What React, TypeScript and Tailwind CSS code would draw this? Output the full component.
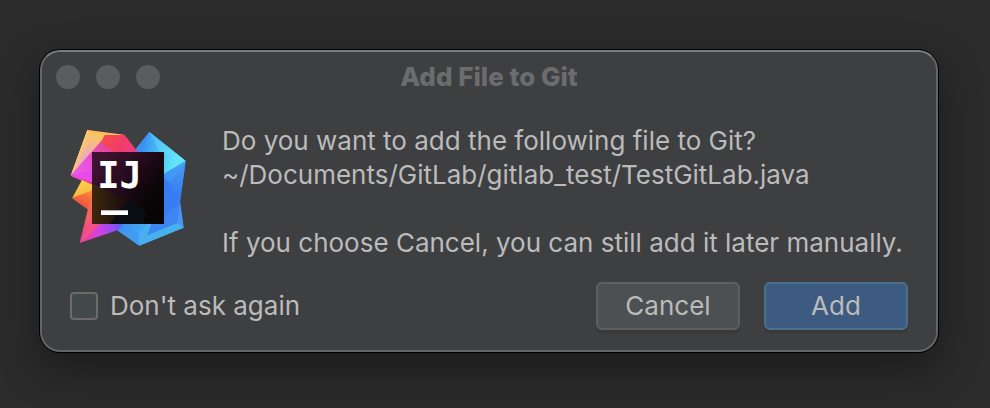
import React from "react";

const lights = ["Close", "Minimize", "Zoom"];

function AppLogo() {
  return (
    <svg viewBox="30 27 351 351" className="size-[117px] shrink-0" role="img" aria-label="IntelliJ IDEA">
      <defs>
        <linearGradient id="lilac" gradientUnits="userSpaceOnUse" x1="100" y1="30" x2="70" y2="160">
          <stop offset="0" stopColor="#fccb58" />
          <stop offset="0.4" stopColor="#f4b498" />
          <stop offset="0.75" stopColor="#ea9ce0" />
          <stop offset="1" stopColor="#e880e4" />
        </linearGradient>
        <linearGradient id="yellow" gradientUnits="userSpaceOnUse" x1="58" y1="95" x2="82" y2="104">
          <stop offset="0" stopColor="#fbcf66" />
          <stop offset="1" stopColor="#f4b498" stopOpacity="0" />
        </linearGradient>
        <linearGradient id="magenta" gradientUnits="userSpaceOnUse" x1="130" y1="75" x2="50" y2="165">
          <stop offset="0" stopColor="#e8449c" />
          <stop offset="0.45" stopColor="#e84cd4" />
          <stop offset="1" stopColor="#ec5cec" />
        </linearGradient>
        <linearGradient id="red" gradientUnits="userSpaceOnUse" x1="140" y1="45" x2="220" y2="100">
          <stop offset="0" stopColor="#f44a50" />
          <stop offset="0.5" stopColor="#f23c66" />
          <stop offset="1" stopColor="#ee3c88" />
        </linearGradient>
        <linearGradient id="rose" gradientUnits="userSpaceOnUse" x1="32" y1="167" x2="100" y2="190">
          <stop offset="0" stopColor="#ee50b8" />
          <stop offset="1" stopColor="#ee2e70" />
        </linearGradient>
        <linearGradient id="orange" gradientUnits="userSpaceOnUse" x1="66" y1="185" x2="75" y2="235">
          <stop offset="0" stopColor="#fbd24c" />
          <stop offset="1" stopColor="#f8b03c" />
        </linearGradient>
        <linearGradient id="ember" gradientUnits="userSpaceOnUse" x1="90" y1="215" x2="70" y2="265">
          <stop offset="0" stopColor="#f8883a" />
          <stop offset="1" stopColor="#f04c42" />
        </linearGradient>
        <linearGradient id="tail" gradientUnits="userSpaceOnUse" x1="95" y1="230" x2="65" y2="365">
          <stop offset="0" stopColor="#f57846" />
          <stop offset="0.5" stopColor="#f45e66" />
          <stop offset="1" stopColor="#ee3c98" />
        </linearGradient>
        <linearGradient id="violet" gradientUnits="userSpaceOnUse" x1="60" y1="365" x2="175" y2="320">
          <stop offset="0" stopColor="#f0408c" />
          <stop offset="0.5" stopColor="#d640e0" />
          <stop offset="1" stopColor="#7e52fa" />
        </linearGradient>
        <linearGradient id="sky" gradientUnits="userSpaceOnUse" x1="235" y1="90" x2="345" y2="110">
          <stop offset="0" stopColor="#348cf4" />
          <stop offset="0.4" stopColor="#44b0f4" />
          <stop offset="1" stopColor="#62e4f8" />
        </linearGradient>
        <linearGradient id="cyan" gradientUnits="userSpaceOnUse" x1="268" y1="40" x2="360" y2="125">
          <stop offset="0" stopColor="#4ab8f6" />
          <stop offset="1" stopColor="#68eafa" />
        </linearGradient>
        <linearGradient id="wing" gradientUnits="userSpaceOnUse" x1="370" y1="130" x2="310" y2="200">
          <stop offset="0" stopColor="#46a4f4" />
          <stop offset="1" stopColor="#3e8cf6" />
        </linearGradient>
        <linearGradient id="deep" gradientUnits="userSpaceOnUse" x1="370" y1="130" x2="340" y2="250">
          <stop offset="0" stopColor="#469cf2" />
          <stop offset="1" stopColor="#3574f0" />
        </linearGradient>
        <linearGradient id="base" gradientUnits="userSpaceOnUse" x1="180" y1="325" x2="260" y2="345">
          <stop offset="0" stopColor="#3c8cf2" />
          <stop offset="1" stopColor="#46aef4" />
        </linearGradient>
        <linearGradient id="tile" gradientUnits="userSpaceOnUse" x1="110" y1="120" x2="290" y2="270">
          <stop offset="0" stopColor="#401430" />
          <stop offset="0.45" stopColor="#250a1c" />
          <stop offset="0.8" stopColor="#0a0608" />
          <stop offset="1" stopColor="#060405" />
        </linearGradient>
        <linearGradient id="tileWarm" gradientUnits="userSpaceOnUse" x1="96" y1="270" x2="210" y2="270">
          <stop offset="0" stopColor="#3e270d" />
          <stop offset="1" stopColor="#140a0c" />
        </linearGradient>
      </defs>

      {/* blue facets */}
      <path d="M268 36 377 123 360 246 371 323 238 377 172 331 190 300H300V110H210Z" fill="#3b86f3" />
      <path d="M268 36 230 84 215 110H305V166L377 123Z" fill="url(#sky)" />
      <path d="M268 36 377 123 300 96Z" fill="url(#cyan)" />
      <path d="M268 36 230 84 222 100H244Z" fill="#3a90f2" />
      <path d="M377 123 305 168V225L330 193Z" fill="url(#wing)" />
      <path d="M377 123 328 190 360 248Z" fill="url(#deep)" />
      <path d="M330 190 300 160V300L360 247Z" fill="#387cf3" />
      <path d="M360 246 371 323 352 309 310 300Z" fill="#4896f2" />
      <path d="M360 246 305 304 352 309Z" fill="#3e84f2" />
      <path d="M352 309 371 323 238 377 262 346Z" fill="#48b0ec" />
      <path d="M172 331 200 305H262L238 345Z" fill="url(#base)" />
      <path d="M172 331 236 345 238 377Z" fill="#419cf2" />
      <path d="M236 345 262 308H275L262 346 238 377Z" fill="#48b0f0" />

      {/* warm facets */}
      <path d="M82 30 194 45 234 97V110H100L32 167Z" fill="url(#red)" />
      <path d="M82 30 194 45H132Z" fill="#fac458" />
      <path d="M82 30 134 45 122 66 32 167Z" fill="url(#lilac)" />
      <path d="M82 30 32 167 95 95Z" fill="url(#yellow)" />
      <path d="M82 30 134 45 122 66Z" fill="#f8c05c" fillOpacity="0.6" />
      <path d="M122 66 32 167 100 150V110H180Z" fill="url(#magenta)" />
      <path d="M32 167 100 146V198Z" fill="#e84ce8" />
      <path d="M32 167 100 188V202L66 182Z" fill="url(#rose)" />
      <path d="M66 180 100 196V212L36 235Z" fill="url(#orange)" />
      <path d="M36 235 100 210V268H82Z" fill="url(#ember)" />
      <path d="M97 213 100 312 59 369Z" fill="url(#tail)" />
      <path d="M59 369 97 300H190L172 331Z" fill="url(#violet)" />
      <path d="M59 369 97 300H136Z" fill="#f2508a" />

      {/* dark tile */}
      <rect x="96" y="96" width="216" height="216" fill="url(#tile)" />
      <path d="M96 190 205 240 150 312H96Z" fill="url(#tileWarm)" />
      <path d="M150 312 205 240 260 275 250 312Z" fill="#090d14" />
      <rect x="123" y="271" width="81" height="14" fill="#fff" />
      <text
        x="112"
        y="204"
        fill="#fff"
        fontSize="111"
        fontWeight="700"
        fontFamily="'DejaVu Sans Mono', monospace"
      >
        IJ
      </text>
    </svg>
  );
}

function DialogButton({ label, primary }: { label: string; primary?: boolean }) {
  return (
    <button
      type="button"
      className={`h-12 w-36 rounded-md border-2 text-[#bbbbbb] shadow-[0_3px_1px_#37393b] ${
        primary ? "border-[#4c708c] bg-[#3d5a80]" : "border-[#5e6060] bg-[#4c5052]"
      }`}
    >
      {label}
    </button>
  );
}

export default function App() {
  return (
    <div className="min-h-screen bg-[#2b2b2b] pt-[50px] pr-[52px] pb-14 pl-10 font-[Inter,sans-serif] text-[26px] leading-[34px] text-[#bbbbbb]">
      <div
        role="dialog"
        aria-labelledby="dialog-title"
        className="rounded-[20px] border-2 border-[#646566] border-t-[#7b7c7d] bg-[#3e3f41] shadow-[0_0_0_1px_#000,0_16px_40px_rgba(0,0,0,0.4)]"
      >
        <header className="grid grid-cols-[1fr_auto_1fr] items-center px-3.5 pt-2">
          <div className="flex gap-4">
            {lights.map((name) => (
              <button
                key={name}
                type="button"
                aria-label={name}
                className="size-6 rounded-full bg-[#5b5c5e]"
              />
            ))}
          </div>
          <h1 id="dialog-title" className="font-extrabold text-[#6b6c6e]">
            Add File to Git
          </h1>
        </header>

        <div className="flex items-start gap-[35px] px-7 pt-[30px]">
          <div className="pt-[5px]">
            <AppLogo />
          </div>
          <div className="whitespace-nowrap">
            <p>Do you want to add the following file to Git?</p>
            <p>~/Documents/GitLab/gitlab_test/TestGitLab.java</p>
            <p className="pt-[34px]">If you choose Cancel, you can still add it later manually.</p>
          </div>
        </div>

        <footer className="flex items-center justify-between px-7 pt-[22px] pb-5">
          <label className="flex items-center gap-3">
            <input
              type="checkbox"
              className="size-7 appearance-none rounded-[4px] border-2 border-[#6b6b6b] bg-[#43494a]"
            />
            Don't ask again
          </label>
          <div className="flex gap-6">
            <DialogButton label="Cancel" />
            <DialogButton label="Add" primary />
          </div>
        </footer>
      </div>
    </div>
  );
}
